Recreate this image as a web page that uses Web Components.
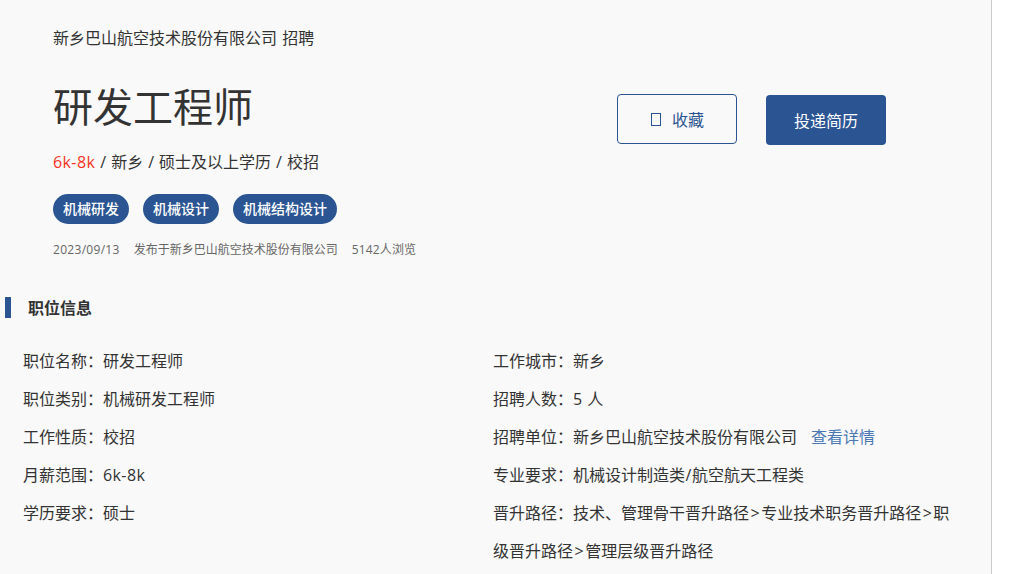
<!DOCTYPE html>
<html lang="zh">
<head>
<meta charset="utf-8">
<title>研发工程师</title>
<style>
    html, body { margin: 0; height: 574px; overflow: hidden; background: #fff; }
    body {
        font-family: "Open Sans", "Noto Sans CJK SC", sans-serif;
        color: #333;
    }
</style>
</head>
<body>
<job-page>
    <job-header company="新乡巴山航空技术股份有限公司 招聘" title="研发工程师">
        <span slot="salary">6k-8k</span>
        <span slot="summary"> / 新乡 / 硕士及以上学历 / 校招</span>
        <job-tag slot="tags">机械研发</job-tag>
        <job-tag slot="tags">机械设计</job-tag>
        <job-tag slot="tags">机械结构设计</job-tag>
        <span slot="footer" class="date">2023/09/13</span>
        <span slot="footer">发布于新乡巴山航空技术股份有限公司</span>
        <span slot="footer" class="views">5142人浏览</span>
    </job-header>
    <section-title>职位信息</section-title>
    <info-grid>
        <info-row slot="left" label="职位名称">研发工程师</info-row>
        <info-row slot="left" label="职位类别">机械研发工程师</info-row>
        <info-row slot="left" label="工作性质">校招</info-row>
        <info-row slot="left" label="月薪范围"><span class="lat">6k-8k</span></info-row>
        <info-row slot="left" label="学历要求">硕士</info-row>
        <info-row slot="right" label="工作城市">新乡</info-row>
        <info-row slot="right" label="招聘人数"><span class="num">5 人</span></info-row>
        <info-row slot="right" label="招聘单位">新乡巴山航空技术股份有限公司<a href="#">查看详情</a></info-row>
        <info-row slot="right" label="专业要求">机械设计制造类<span class="sep">/</span>航空航天工程类</info-row>
        <info-row slot="right" label="晋升路径">技术、管理骨干晋升路径<span class="gt">&gt;</span>专业技术职务晋升路径<span class="gt">&gt;</span>职<wbr>级晋升路径<span class="gt">&gt;</span>管理层级晋升路径</info-row>
    </info-grid>
</job-page>
<script>
class JobPage extends HTMLElement {
    constructor() {
        super();
        this.attachShadow({ mode: 'open' });
        this.shadowRoot.innerHTML = `
            <style>
                :host {
                    display: block;
                    box-sizing: border-box;
                    width: 992px;
                    height: 574px;
                    overflow: hidden;
                    background: #f9f9f9;
                    border-right: 1px solid #ccc;
                }
            </style>
            <slot></slot>
        `;
    }
}

class JobHeader extends HTMLElement {
    constructor() {
        super();
        this.attachShadow({ mode: 'open' });
    }

    connectedCallback() {
        this.shadowRoot.innerHTML = `
            <style>
                :host {
                    display: flex;
                    justify-content: space-between;
                    padding: 26px 105px 0 53px;
                    height: 271px;
                    box-sizing: border-box;
                }
                .company { font-size: 16px; line-height: 24px; word-spacing: 1px; }
                h1 {
                    margin: 27px 0 0;
                    font-size: 40px;
                    font-weight: 400;
                    line-height: 60px;
                }
                .meta { margin-top: 13px; font-size: 16px; line-height: 24px; word-spacing: 0.85px; }
                .salary { color: #f5321e; letter-spacing: 0.4px; }
                .tags { display: flex; gap: 14px; margin-top: 20px; }
                .footer {
                    display: flex;
                    gap: 14px;
                    margin-top: 17px;
                    font-size: 12px;
                    line-height: 18px;
                    color: #666;
                }
                ::slotted(.date) { letter-spacing: 0.3px; }
                ::slotted(.views) { letter-spacing: 0.15px; }
                .actions { display: flex; gap: 29px; margin-top: 68px; }
                button {
                    box-sizing: border-box;
                    width: 120px;
                    height: 50px;
                    border-radius: 4px;
                    font: inherit;
                    font-size: 16px;
                    padding: 0;
                    display: flex;
                    align-items: center;
                    justify-content: center;
                }
                .save {
                    background: transparent;
                    border: 1px solid #2b5592;
                    color: #2b5592;
                }
                .save i {
                    box-sizing: border-box;
                    width: 10px;
                    height: 13px;
                    border: 1px solid #2b5592;
                    margin: 0 11px 0 1px;
                }
                .apply {
                    background: #2b5592;
                    border: 0;
                    color: #fff;
                    margin-top: 1px;
                }
            </style>
            <div class="info">
                <div class="company">${this.getAttribute('company')}</div>
                <h1>${this.getAttribute('title')}</h1>
                <div class="meta"><span class="salary"><slot name="salary"></slot></span><slot name="summary"></slot></div>
                <div class="tags"><slot name="tags"></slot></div>
                <div class="footer"><slot name="footer"></slot></div>
            </div>
            <div class="actions">
                <button class="save"><i></i>收藏</button>
                <button class="apply">投递简历</button>
            </div>
        `;
        // slotted children need the gaps of their parent
        this.shadowRoot.querySelectorAll('.tags slot, .footer slot').forEach(s => {
            s.style.display = 'contents';
        });
    }
}

class JobTag extends HTMLElement {
    constructor() {
        super();
        this.attachShadow({ mode: 'open' });
        this.shadowRoot.innerHTML = `
            <style>
                :host {
                    display: block;
                    height: 30px;
                    padding: 0 10px;
                    border-radius: 15px;
                    background: #2b5592;
                    color: #fff;
                    font-size: 14px;
                    font-weight: 500;
                    line-height: 30px;
                }
            </style>
            <slot></slot>
        `;
    }
}

class SectionTitle extends HTMLElement {
    constructor() {
        super();
        this.attachShadow({ mode: 'open' });
        this.shadowRoot.innerHTML = `
            <style>
                :host {
                    display: block;
                    margin: 26px 0 0 5px;
                    padding-left: 17px;
                    border-left: 6px solid #2b5592;
                    height: 21px;
                    font-size: 16px;
                    font-weight: 700;
                    line-height: 23px;
                }
            </style>
            <slot></slot>
        `;
    }
}

class InfoGrid extends HTMLElement {
    constructor() {
        super();
        this.attachShadow({ mode: 'open' });
        this.shadowRoot.innerHTML = `
            <style>
                :host {
                    display: grid;
                    grid-template-columns: 470px 460px;
                    padding: 24px 0 0 23px;
                }
            </style>
            <div><slot name="left"></slot></div>
            <div><slot name="right"></slot></div>
        `;
    }
}

class InfoRow extends HTMLElement {
    constructor() {
        super();
        this.attachShadow({ mode: 'open' });
    }

    connectedCallback() {
        this.shadowRoot.innerHTML = `
            <style>
                :host {
                    display: block;
                    font-size: 16px;
                    line-height: 38px;
                }
                ::slotted(a) {
                    margin-left: 14px;
                    color: #4a78b5;
                    text-decoration: none;
                }
                ::slotted(.lat) { letter-spacing: 0.4px; }
                ::slotted(.num) { word-spacing: 1px; }
                ::slotted(.sep) { padding: 0 0.5px; }
                ::slotted(.gt) { padding: 0 1.5px; }
            </style>
            ${this.getAttribute('label')}：<slot></slot>
        `;
    }
}

customElements.define('job-page', JobPage);
customElements.define('job-header', JobHeader);
customElements.define('job-tag', JobTag);
customElements.define('section-title', SectionTitle);
customElements.define('info-grid', InfoGrid);
customElements.define('info-row', InfoRow);
</script>
</body>
</html>
